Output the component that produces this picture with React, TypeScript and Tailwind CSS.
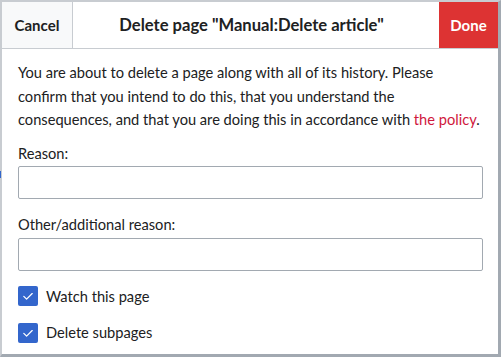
import React from "react";

function Check() {
  return (
    <span className="flex h-[20px] w-[20px] shrink-0 items-center justify-center rounded-[2px] bg-[#3366cc]">
      <svg width="14" height="14" viewBox="0 0 20 20" fill="none">
        <path d="M4 10.5l4 4 8-8" stroke="white" strokeWidth="1.8" strokeLinecap="round" strokeLinejoin="round" />
      </svg>
    </span>
  );
}

export default function App() {
  return (
    <div className="relative h-[357px] w-[501px] overflow-hidden bg-white" style={{ fontFamily: "Lato, 'Noto Sans', sans-serif" }}>
      <span className="absolute left-0 top-[171px] h-[7px] w-[1px] bg-[#3366cc]" />
      <div className="flex h-[357px] w-[501px] flex-col border-l-2 border-r-[3px] border-t-2 border-b-[3px] border-l-[#c8ccd1] border-r-[#a2a9b1] border-t-[#c8ccd1] border-b-[#a2a9b1] text-[#202122]">
        <div className="flex h-[47px] shrink-0 border-b border-[#c8ccd1]">
          <div className="flex w-[71px] items-center justify-center border-r border-[#c8ccd1] bg-[#f8f9fa] text-[15px] font-bold text-[#202122]">
            Cancel
          </div>
          <div className="flex flex-1 items-center justify-center pr-[9px] text-[16.6px] font-bold">
            Delete page "Manual:Delete article"
          </div>
          <div className="flex w-[59px] items-center justify-center bg-[#d33] text-[15px] font-bold text-white">
            Done
          </div>
        </div>
        <div className="flex flex-col px-[16px] pt-[12px] text-[14.65px] leading-[23.5px]">
          <p>
            You are about to delete a page along with all of its history. Please confirm that you intend to do this, that you understand the consequences, and that you are doing this in accordance with{" "}
            <span className="text-[#d0183c]">the policy</span>.
          </p>
          <div className="mt-[10px]">Reason:</div>
          <div className="mt-[1px] h-[33px] w-[465px] rounded-[2px] border border-[#a2a9b1]" />
          <div className="mt-[14px]">Other/additional reason:</div>
          <div className="mt-[1px] h-[33px] w-[465px] rounded-[2px] border border-[#a2a9b1]" />
          <div className="mt-[14px] flex items-center gap-[8px]">
            <Check />
            <span>Watch this page</span>
          </div>
          <div className="mt-[13px] flex items-center gap-[8px]">
            <Check />
            <span>Delete subpages</span>
          </div>
        </div>
      </div>
    </div>
  );
}
